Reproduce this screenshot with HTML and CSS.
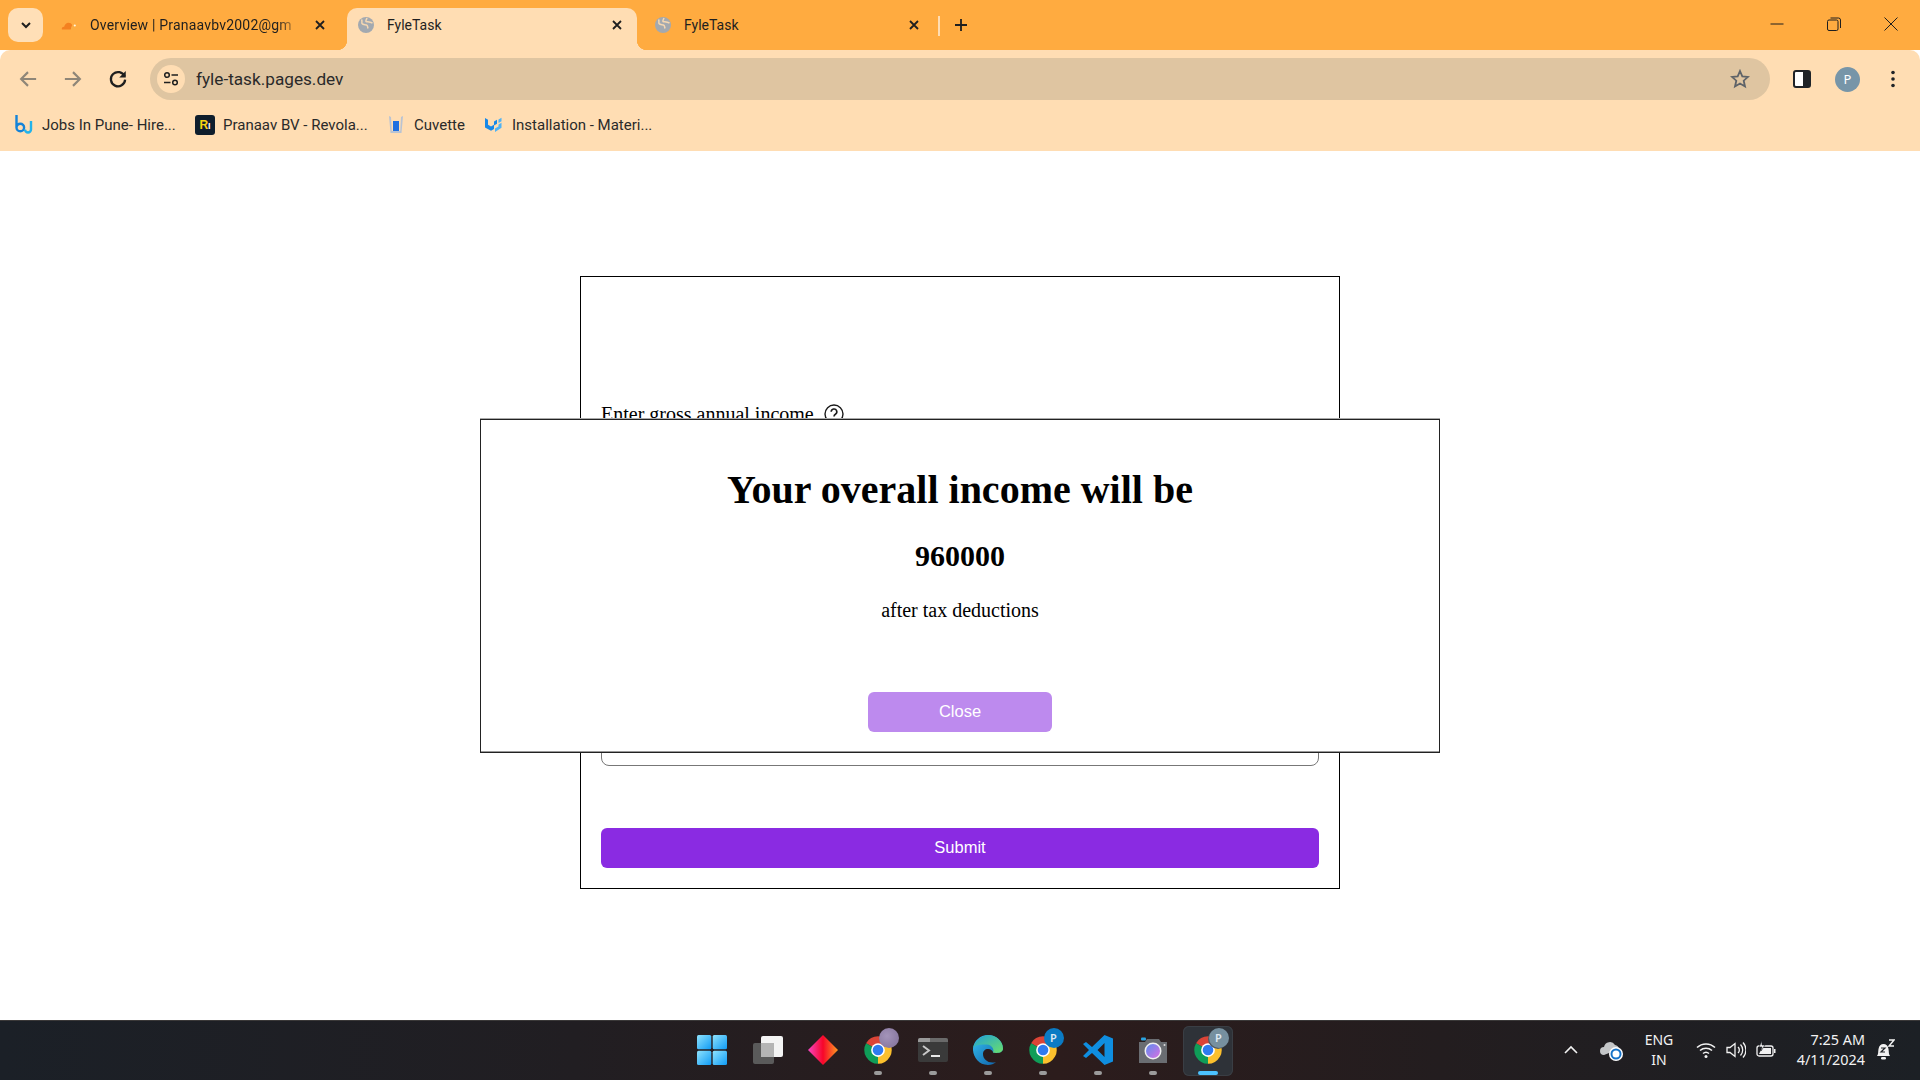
FILE: index.html
```html
<!DOCTYPE html>
<html lang="en">
<head>
<meta charset="utf-8">
<title>FyleTask</title>
<link rel="stylesheet" href="styles.css">
</head>
<body>
<svg class="defs" width="0" height="0" aria-hidden="true">
  <defs>
    <symbol id="chrome" viewBox="0 0 48 48">
      <path fill="#db4437" d="M24 24L4.95 13A22 22 0 0 1 43.05 13Z"/>
      <path fill="#0f9d58" d="M24 24L4.95 13A22 22 0 0 0 24 46Z"/>
      <path fill="#fbc02d" d="M24 24L43.05 13A22 22 0 0 1 24 46Z"/>
      <circle cx="24" cy="24" r="11" fill="#fff"/>
      <circle cx="24" cy="24" r="8.5" fill="#2f7bf0"/>
    </symbol>
    <symbol id="globe" viewBox="0 0 16 16">
      <circle cx="8" cy="8" r="8" fill="#a3a9b0"/>
      <path fill="none" stroke="#ffddb3" stroke-width="1.500" d="M3.500 2.500c1 1.500 0 2.500.5 4c1 1.500 3 1 4.500 1.500c1.500.5 1 2 1.500 3.500M9 1c-.5 1.500-1.500 2-1 3.500c1.500.5 3.500 0 6.500 1.500" opacity=".9"/>
    </symbol>
    <linearGradient id="win" x1="0" y1="0" x2="1" y2="1">
      <stop offset="0" stop-color="#8fe3fd"/><stop offset="1" stop-color="#0f9bf5"/>
    </linearGradient>
    <linearGradient id="diamond" x1="0" y1="0" x2="1" y2="0">
      <stop offset="0" stop-color="#f746c4"/><stop offset=".5" stop-color="#f7062a"/><stop offset="1" stop-color="#fb9a21"/>
    </linearGradient>
    <linearGradient id="edgeA" x1="0" y1="0" x2="1" y2="1">
      <stop offset="0" stop-color="#35c1f1"/><stop offset="1" stop-color="#0c59a4"/>
    </linearGradient>
    <linearGradient id="edgeB" x1="0" y1="0" x2="1" y2="1">
      <stop offset="0" stop-color="#1f9fd8"/><stop offset="1" stop-color="#6be06b"/>
    </linearGradient>
    <linearGradient id="lens" x1="0" y1="0" x2="1" y2="1">
      <stop offset="0" stop-color="#5c8cf0"/><stop offset="1" stop-color="#d86fe0"/>
    </linearGradient>
  </defs>
</svg>

<div class="window">
  <header class="tabstrip">
    <button class="tab-search" aria-label="Search tabs">
      <svg width="12" height="12" viewBox="0 0 12 12"><path d="M2 4l4 4 4-4" fill="none" stroke="#1f1f1f" stroke-width="2"/></svg>
    </button>
    <div class="tab">
      <svg class="favicon" viewBox="0 0 18 14"><path fill="#f48120" d="M1 12c-.5-1.600.8-3 2.600-2.900C4 6.500 6 4.500 8.500 4.500c2 0 3.300 1 4 2.500l-1.500 5z"/><path fill="#fbad41" d="M11 12l1-3.200c2-.8 4.500.8 4.500 3.200z"/><circle cx="15.500" cy="7.500" r="1.200" fill="#fff6dd"/></svg>
      <span class="tab-title fade">Overview | Pranaavbv2002@gm</span>
      <svg class="tab-close" viewBox="0 0 12 12"><path d="M2 2l8 8M10 2l-8 8" stroke="#1f1f1f" stroke-width="1.800"/></svg>
    </div>
    <div class="tab active">
      <svg class="favicon"><use href="#globe"/></svg>
      <span class="tab-title">FyleTask</span>
      <svg class="tab-close" viewBox="0 0 12 12"><path d="M2 2l8 8M10 2l-8 8" stroke="#1f1f1f" stroke-width="1.800"/></svg>
    </div>
    <div class="tab">
      <svg class="favicon"><use href="#globe"/></svg>
      <span class="tab-title">FyleTask</span>
      <svg class="tab-close" viewBox="0 0 12 12"><path d="M2 2l8 8M10 2l-8 8" stroke="#1f1f1f" stroke-width="1.800"/></svg>
    </div>
    <span class="tab-sep"></span>
    <svg class="new-tab" viewBox="0 0 14 14"><path d="M7 1v12M1 7h12" stroke="#1f1f1f" stroke-width="1.800"/></svg>
    <div class="win-controls">
      <svg class="win-btn" viewBox="0 0 14 14"><path d="M0.500 7h13" stroke="#1f1f1f" stroke-width="1"/></svg>
      <svg class="win-btn" viewBox="0 0 14 14"><rect x="0.500" y="3" width="10.500" height="10.500" rx="1.500" fill="none" stroke="#1f1f1f"/><path d="M3.500 1h8a2 2 0 0 1 2 2v8" fill="none" stroke="#1f1f1f"/></svg>
      <svg class="win-btn" viewBox="0 0 14 14"><path d="M.5.5l13 13M13.500.5l-13 13" stroke="#1f1f1f" stroke-width="1"/></svg>
    </div>
  </header>

  <div class="chrome-bar">
    <nav class="toolbar">
      <svg class="nav-icon first" viewBox="0 0 16 16"><path d="M14.500 8H2.500M8 2.500L2.500 8 8 13.500" fill="none" stroke="#8f8678" stroke-width="1.700"/></svg>
      <svg class="nav-icon" viewBox="0 0 16 16"><path d="M1.500 8h12M8 2.500L13.500 8 8 13.500" fill="none" stroke="#8f8678" stroke-width="1.700"/></svg>
      <svg class="nav-icon" viewBox="0 0 16 16"><path d="M13.300 6A5.700 5.700 0 1 0 13.700 8.500" fill="none" stroke="#1f1f1f" stroke-width="1.800"/><path d="M14.200 1.500v5.200H9z" fill="#1f1f1f"/></svg>
      <div class="omnibox">
        <span class="site-info">
          <svg width="16" height="16" viewBox="0 0 16 16"><circle cx="4" cy="4" r="2.300" fill="none" stroke="#1f1f1f" stroke-width="1.500"/><path d="M8.500 4h6.500M1 11.500h6.500" stroke="#1f1f1f" stroke-width="1.600"/><circle cx="12" cy="11.500" r="2.300" fill="none" stroke="#1f1f1f" stroke-width="1.500"/></svg>
        </span>
        <span class="url">fyle-task.pages.dev</span>
        <svg class="star" viewBox="0 0 20 20"><path d="M10 2l2.300 5.400 5.700.5-4.300 3.800 1.300 5.800L10 14.500l-5 3 1.300-5.800L2 7.900l5.700-.5z" fill="none" stroke="#5f6368" stroke-width="1.800"/></svg>
      </div>
      <svg class="side-panel" viewBox="0 0 18 18"><rect x="1" y="1" width="16" height="16" rx="2" fill="#fff" stroke="#1f2328" stroke-width="2"/><rect x="10" y="1" width="7" height="16" fill="#1f2328"/></svg>
      <span class="avatar">P</span>
      <svg class="menu-dots" viewBox="0 0 4 18"><circle cx="2" cy="2.500" r="1.800" fill="#1f2328"/><circle cx="2" cy="9" r="1.800" fill="#1f2328"/><circle cx="2" cy="15.500" r="1.800" fill="#1f2328"/></svg>
    </nav>
    <div class="bookmarks">
      <a class="bookmark bm-1">
        <svg class="bm-icon" viewBox="0 0 20 20"><path d="M2.500 0v12.500a3.800 3.800 0 0 0 7.600 0a3.800 3.800 0 0 0-7.600 0" fill="none" stroke="#1583d8" stroke-width="2.400"/><path d="M11 14.500a3 3 0 0 0 6 0V6" fill="none" stroke="#23b3ea" stroke-width="2.400"/></svg>
        <span>Jobs In Pune- Hire...</span>
      </a>
      <a class="bookmark bm-2">
        <span class="rev-icon">R<i>I</i></span>
        <span>Pranaav BV - Revola...</span>
      </a>
      <a class="bookmark bm-3">
        <svg class="bm-icon" viewBox="0 0 20 20"><path d="M3 1l1.500 17h11L17 1l-2 1-.8 14H5.800L5 2z" fill="#b9c3d3"/><rect x="7" y="6" width="6" height="10" fill="#1f6fe0"/></svg>
        <span>Cuvette</span>
      </a>
      <a class="bookmark bm-4">
        <svg class="bm-icon" viewBox="0 0 20 20"><path d="M1 3l3 1.800v5L7 11.500l3-1.700V6.500L13 4.700v4L10 10.500v3.500l-3 1.800L1 12.500z" fill="#1788e8"/><path d="M14.500 4.500l3-1.700v3.500l-3 1.700zM14.500 9.500l3-1.700v5L11 17v-3.500l3.500-2z" fill="#4fb3f5"/></svg>
        <span>Installation - Materi...</span>
      </a>
    </div>
  </div>

  <main class="page">
    <form class="card">
      <div class="field-label">
        <span>Enter gross annual income</span>
        <svg class="help" viewBox="0 0 20 20"><circle cx="10" cy="10" r="9" fill="none" stroke="#1a1a1a" stroke-width="1.400"/><path d="M7.200 7.800a2.800 2.800 0 1 1 4.200 2.400c-1 .6-1.400 1-1.400 2.200" fill="none" stroke="#1a1a1a" stroke-width="1.600"/><circle cx="10" cy="15" r="1.100" fill="#1a1a1a"/></svg>
      </div>
      <div class="field-box"></div>
      <button class="btn submit" type="button">Submit</button>
    </form>

    <section class="modal">
      <h1>Your overall income will be</h1>
      <h2>960000</h2>
      <p>after tax deductions</p>
      <button class="btn close" type="button">Close</button>
    </section>
  </main>

  <footer class="taskbar">
    <div class="apps">
      <div class="app">
        <svg class="app-icon win-logo" viewBox="0 0 30 30"><rect x="0" y="0" width="14.300" height="14.300" rx="1.500" fill="url(#win)"/><rect x="15.700" y="0" width="14.300" height="14.300" rx="1.500" fill="url(#win)"/><rect x="0" y="15.700" width="14.300" height="14.300" rx="1.500" fill="url(#win)"/><rect x="15.700" y="15.700" width="14.300" height="14.300" rx="1.500" fill="url(#win)"/></svg>
      </div>
      <div class="app">
        <svg class="app-icon" viewBox="0 0 30 30"><rect x="0" y="8" width="21" height="21" rx="2" fill="#5a5a5a"/><rect x="8" y="1" width="22" height="21" rx="2" fill="#f4f4f4"/><rect x="8" y="8" width="13" height="14" fill="#b5b5b5"/></svg>
      </div>
      <div class="app">
        <svg class="app-icon" viewBox="0 0 30 30"><path d="M15 0L30 15 15 30 0 15z" fill="url(#diamond)"/></svg>
      </div>
      <div class="app running">
        <svg class="app-icon"><use href="#chrome"/></svg>
        <span class="badge photo"></span>
      </div>
      <div class="app running">
        <svg class="app-icon" viewBox="0 0 30 30"><rect x="0" y="3" width="30" height="24" rx="2" fill="#3a3a3a"/><path d="M0 5a2 2 0 0 1 2-2h10v4H0z" fill="#9a9a9a"/><path d="M12 3h16a2 2 0 0 1 2 2v2H12z" fill="#6a6a6a"/><path d="M5 11l6 4.500-6 4.500" fill="none" stroke="#c8c8c8" stroke-width="2"/><path d="M13 21h9" stroke="#e8e8e8" stroke-width="2"/></svg>
      </div>
      <div class="app running">
        <svg class="app-icon" viewBox="0 0 30 30"><path d="M15 0C7 0 1 6 0 13c-.6 8 5 17 15 17c3 0 6-1 8-3c-7 2-13-2-13-8c0-3 2-5 5-5c3 0 5 2 5 3.500c4 1 10 .5 10-4C30 6 23 0 15 0z" fill="url(#edgeA)"/><path d="M0 13C2 6 8 1 15 0c8 0 15 6 15 13.500c0 4.500-6 5-10 4c1.500-3-1-7.500-6-8C8 9 2 10 0 13z" fill="url(#edgeB)"/></svg>
      </div>
      <div class="app running">
        <svg class="app-icon"><use href="#chrome"/></svg>
        <span class="badge blue">P</span>
      </div>
      <div class="app running">
        <svg class="app-icon" viewBox="0 0 30 30"><path d="M21.500 0L30 3.500v23L21.500 30 9 18l-6 5-3-2 6-6-6-6 3-2 6 5zM21.500 8l-7 7 7 7z" fill="#0f8ee0" fill-rule="evenodd"/></svg>
      </div>
      <div class="app running">
        <svg class="app-icon" viewBox="0 0 30 30"><path d="M1 7h6l2-3h12l2 3h6v21H1z" fill="#6a6d72"/><rect x="3" y="2.500" width="5" height="3" rx="1" fill="#2aa3e0"/><circle cx="15" cy="16" r="8.500" fill="#f0f0f0"/><circle cx="15" cy="16" r="7" fill="url(#lens)"/><circle cx="26.500" cy="10" r="1" fill="#ddd"/></svg>
      </div>
      <div class="app running active">
        <svg class="app-icon"><use href="#chrome"/></svg>
        <span class="badge slate">P</span>
      </div>
    </div>
    <div class="tray">
      <svg class="tray-chevron" viewBox="0 0 16 10"><path d="M2 8l6-6 6 6" fill="none" stroke="#f2f2f2" stroke-width="1.600"/></svg>
      <svg class="tray-cloud" viewBox="0 0 24 22"><path d="M4 16a4 4 0 0 1 0-8a6 6 0 0 1 11-2a5 5 0 0 1 4 4z" fill="#c4c6c8"/><circle cx="16" cy="15" r="7" fill="#fff"/><circle cx="16" cy="15" r="4.500" fill="none" stroke="#1673c8" stroke-width="2"/></svg>
      <div class="lang"><span>ENG</span><span>IN</span></div>
      <svg class="tray-icon first" viewBox="0 0 20 20"><path d="M1 7.500a13 13 0 0 1 18 0M4 10.500a9 9 0 0 1 12 0M7 13.500a4.500 4.500 0 0 1 6 0" fill="none" stroke="#f2f2f2" stroke-width="1.500"/><circle cx="10" cy="16.500" r="1.500" fill="#f2f2f2"/></svg>
      <svg class="tray-icon" viewBox="0 0 20 20"><path d="M1 7.500h3l5-4v13l-5-4H1z" fill="none" stroke="#f2f2f2" stroke-width="1.300"/><path d="M12 7a4 4 0 0 1 0 6M14.500 4.500a8 8 0 0 1 0 11M17 2.500a11 11 0 0 1 0 15" fill="none" stroke="#f2f2f2" stroke-width="1.300"/></svg>
      <svg class="tray-icon" viewBox="0 0 20 20"><rect x="1" y="6" width="16" height="10" rx="2" fill="none" stroke="#f2f2f2" stroke-width="1.300"/><path d="M6 8h9v6H3z" fill="#f2f2f2"/><rect x="18" y="9" width="1.500" height="4" fill="#f2f2f2"/><path d="M6 1L3 7h3l-1 4 4-6H6z" fill="#f2f2f2" stroke="#1d2025" stroke-width=".6"/></svg>
      <div class="clock"><span>7:25 AM</span><span>4/11/2024</span></div>
      <svg class="tray-bell" viewBox="0 0 20 22"><path d="M2 17c1.500-2 1-4 1.500-7C4 6.500 6 5 8.500 5s4.500 1.500 5 5c.5 3 0 5 1.500 7z" fill="#f2f2f2"/><rect x="6" y="18" width="5" height="2.500" rx="1.200" fill="#f2f2f2"/><path d="M6 9h4l-4 4h4" fill="none" stroke="#1d2025" stroke-width="1.200"/><path d="M14 1h5l-5 6h5" fill="none" stroke="#f2f2f2" stroke-width="1.400"/></svg>
    </div>
  </footer>
</div>
</body>
</html>
```
FILE: styles.css
```css
* { box-sizing: border-box; }
html, body { margin: 0; padding: 0; height: 100%; }
body { background: #fff; overflow: hidden; font-family: "Liberation Serif", serif; color: #000; }
.defs { display: block; height: 0; }
.window { height: 1080px; display: flex; flex-direction: column; }

/* Tab strip */
.tabstrip {
  height: 50px; flex: none; background: #ffab40; display: flex; align-items: flex-end;
  padding-left: 8px; font-family: Roboto, "Noto Sans", sans-serif; font-size: 14px; color: #1f1f1f;
}
.tab-search {
  width: 35px; height: 34px; margin: 0 7px 8px 0; padding: 0; border: 0; border-radius: 10px;
  background: #ffdfb7; display: flex; align-items: center; justify-content: center;
}
.tab {
  width: 290px; height: 42px; flex: none; display: flex; align-items: center; position: relative;
  margin-right: 7px; padding: 0 14px 8px 11px; border-radius: 10px 10px 0 0;
}
.tab.active { background: #ffddb3; }
.tab.active::before, .tab.active::after {
  content: ""; position: absolute; bottom: 0; width: 10px; height: 10px;
}
.tab.active::before { left: -10px; background: radial-gradient(circle at 0 0, transparent 10px, #ffddb3 10.5px); }
.tab.active::after { right: -10px; background: radial-gradient(circle at 100% 0, transparent 10px, #ffddb3 10.5px); }
.favicon { width: 16px; height: 16px; flex: none; margin-right: 13px; }
.tab-title { flex: 1; min-width: 0; white-space: nowrap; overflow: hidden; }
.tab-title.fade {
  letter-spacing: .2px; margin-right: 6px;
  -webkit-mask-image: linear-gradient(to right, #000 88%, transparent 100%);
  mask-image: linear-gradient(to right, #000 88%, transparent 100%);
}
.tab-close { width: 12px; height: 12px; flex: none; margin-left: 6px; }
.tab-sep { width: 2px; height: 20px; background: #ffddb3; margin: 0 0 14px -3px; flex: none; }
.new-tab { width: 14px; height: 14px; margin: 0 0 18px 14px; flex: none; }
.win-controls { margin-left: auto; display: flex; align-self: stretch; align-items: center; padding: 0 22px 2px 0; gap: 43px; }
.win-btn { width: 14px; height: 14px; display: block; }

/* Toolbar and bookmarks */
.chrome-bar { height: 101px; flex: none; background: #ffddb3; border-radius: 10px 10px 0 0; font-family: Roboto, "Noto Sans", sans-serif; color: #2a2a2a; }
.toolbar { height: 58px; display: flex; align-items: center; padding-top: 0; }
.nav-icon { width: 20px; height: 20px; flex: none; margin-left: 25px; }
.nav-icon.first { margin-left: 18px; }
.omnibox {
  width: 1620px; height: 42px; margin-left: 22px; border-radius: 21px; background: #dfc5a1;
  display: flex; align-items: center; padding: 0 20px 0 7px; flex: none;
}
.site-info { width: 28px; height: 28px; border-radius: 50%; background: #ffddb3; display: flex; align-items: center; justify-content: center; flex: none; }
.url { margin-left: 11px; font-size: 17.2px; color: #2a2a2a; flex: 1; }
.star { width: 20px; height: 20px; flex: none; }
.side-panel { width: 18px; height: 18px; flex: none; margin-left: 23px; }
.avatar {
  width: 25px; height: 25px; flex: none; margin-left: 24px; border-radius: 50%; background: #7795a8; color: #fff;
  font-size: 13px; display: flex; align-items: center; justify-content: center; font-family: "Noto Sans", sans-serif;
}
.menu-dots { width: 4px; height: 18px; flex: none; margin-left: 31px; }
.bookmarks { height: 43px; display: flex; align-items: center; padding: 0 0 9px 14px; font-size: 15px; }
.bookmark { display: flex; align-items: center; gap: 8px; white-space: nowrap; color: #2a2a2a; }
.bm-icon { width: 20px; height: 20px; flex: none; }
.bm-1 { width: 181px; }
.bm-2 { width: 191px; }
.bm-3 { width: 98px; }
.rev-icon {
  width: 20px; height: 20px; flex: none; border-radius: 3px; background: #0f1d2c; color: #f6d312; font: bold 12px/20px "Liberation Sans", sans-serif;
  text-align: center;
}
.rev-icon i { font-style: normal; color: #fff; font-size: 9px; }

/* Page */
.page { flex: 1; min-height: 0; background: #fff; position: relative; padding-top: 125px; }
.card {
  width: 760px; height: 613px; margin: 0 auto; border: 1px solid #000; padding: 0 20px 20px;
  display: flex; flex-direction: column;
}
.field-label { display: flex; align-items: center; margin-top: 124px; font-size: 20px; line-height: 23px; height: 26px; gap: 10px; }
.help { width: 20px; height: 20px; flex: none; }
.field-box { flex: none; height: 60px; margin-top: auto; border: 1px solid #777; border-radius: 8px; margin-bottom: 62px; }
.btn {
  display: block; height: 40px; border: 0; border-radius: 6px; color: #fff; font: 16.5px/38px "Liberation Sans", Arial, sans-serif; padding: 0 0 2px; flex: none;
}
.submit { width: 100%; background: #8a2be2; }
.modal {
  position: absolute; left: 480px; top: 268px; width: 960px; height: 334px; background: #fff;
  border: 1px solid #222; box-shadow: 0 -1px 0 #aaa, inset 0 -1px 0 #999;
  display: flex; flex-direction: column; align-items: center; padding-top: 47px;
}
.modal h1 { margin: 0; font-size: 40px; line-height: 46px; font-weight: bold; }
.modal h2 { margin: 26px 0 0; font-size: 30px; line-height: 34px; font-weight: bold; }
.modal p { margin: 26px 0 0; font-size: 20px; line-height: 23px; }
.close { width: 184px; margin-top: 70px; background: #bd8aee; }

/* Taskbar */
.taskbar {
  height: 60px; flex: none; display: grid; grid-template-columns: 1fr auto 1fr; align-items: center;
  background: linear-gradient(to right, #1b2027 0%, #211e22 30%, #2c1c1c 55%, #231d1f 75%, #1c2025 100%);
  border-top: 1px solid #3a3838; font-family: "Noto Sans", sans-serif; color: #f2f2f2; font-size: 14px;
}
.apps { grid-column: 2; display: flex; gap: 5px; }
.app { width: 50px; height: 50px; display: flex; align-items: center; justify-content: center; position: relative; border-radius: 6px; padding-bottom: 2px; }
.app.active { background: #2e3238; box-shadow: inset 0 0 0 1px #3a3e44; }
.app-icon { width: 30px; height: 30px; display: block; }
.win-logo { margin-right: 2px; }
.app.running::after {
  content: ""; position: absolute; left: 21px; bottom: 1px; width: 8px; height: 4px; border-radius: 2px; background: #9b9b9b;
}
.app.active::after { left: 15px; width: 20px; background: #4cc2ff; }
.badge {
  position: absolute; left: 26px; top: 2px; width: 20px; height: 20px; border-radius: 50%; color: #dfe9f2;
  font-size: 11px; font-weight: 600; display: flex; align-items: center; justify-content: center;
}
.badge.photo { background: radial-gradient(circle at 40% 40%, #a494ba, #7f6f96); }
.badge.blue { background: #0b7bc4; }
.badge.slate { background: #76909f; box-shadow: -1px 1px 0 #4f5a63; }
.tray { grid-column: 3; display: flex; align-items: center; justify-content: flex-end; padding: 0 25px 2px 0; }
.tray-chevron { width: 16px; height: 10px; flex: none; }
.tray-cloud { width: 24px; height: 22px; flex: none; margin-left: 21px; }
.lang { width: 40px; margin-left: 15px; display: flex; flex-direction: column; align-items: center; line-height: 20px; }
.tray-icon { width: 20px; height: 20px; flex: none; margin-left: 10px; }
.tray-icon.first { margin-left: 17px; }
.clock { width: 80px; margin-left: 9px; display: flex; flex-direction: column; align-items: flex-end; line-height: 20px; white-space: nowrap; font-size: 14.4px; }
.tray-bell { width: 20px; height: 22px; flex: none; margin-left: 10px; }
```
